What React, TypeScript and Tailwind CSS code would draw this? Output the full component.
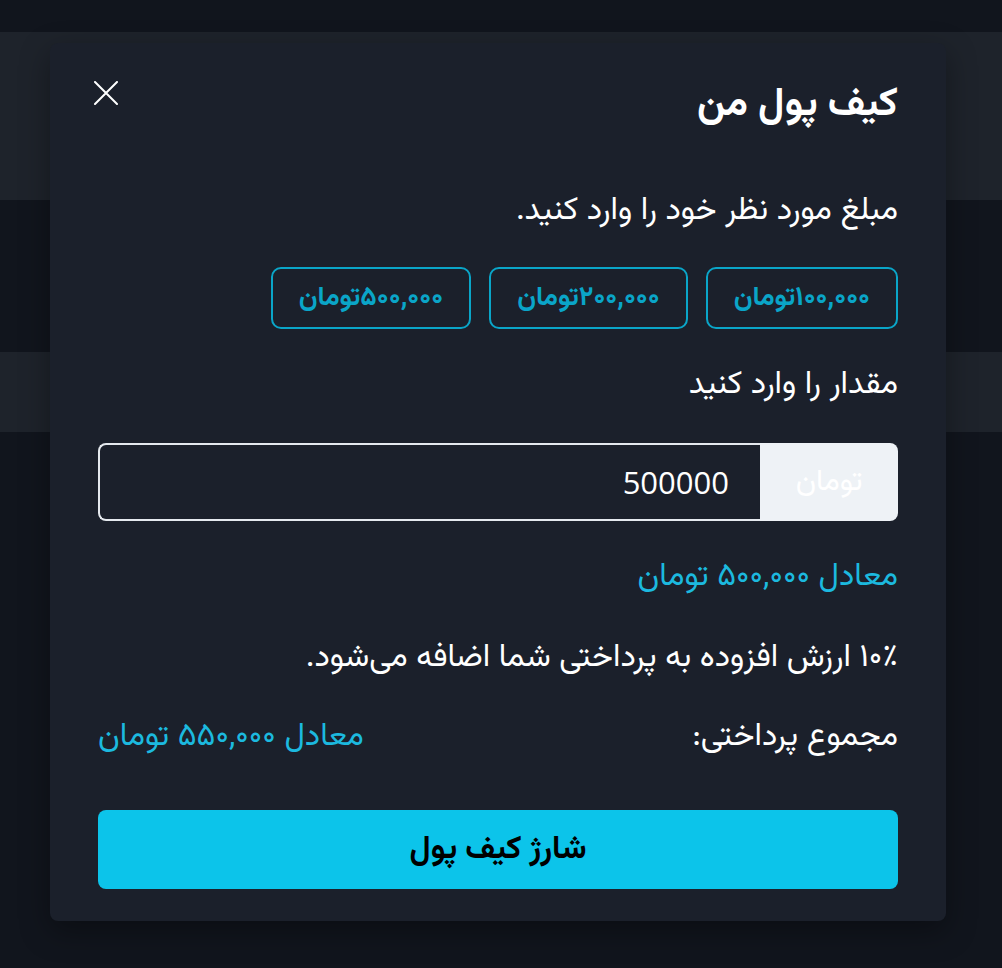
import React from "react";

const font = { fontFamily: '"Vazirmatn", "DejaVu Sans", "Noto Sans Arabic", sans-serif' };

export default function App() {
  const presets = ["۱۰۰,۰۰۰تومان", "۲۰۰,۰۰۰تومان", "۵۰۰,۰۰۰تومان"];
  return (
    <div className="relative w-[1002px] h-[968px] overflow-hidden bg-[#11151d]" style={font}>
      <div className="pt-8">
        <div className="h-[168px] bg-[#1e232b]" />
        <div className="h-[152px]" />
        <div className="h-[80px] bg-[#1e232b]" />
      </div>

      <div
        dir="rtl"
        className="absolute left-[50px] top-[43px] w-[896px] h-[878px] rounded-lg bg-[#1b202b] shadow-[0_10px_30px_rgba(0,0,0,0.35)] px-12 pt-[34px]"
      >
        <div className="flex items-start justify-between h-[56px]">
          <h2 className="text-[40px] font-bold text-white leading-[56px]">کیف پول من</h2>
          <button className="mt-[4px] w-[24px] h-[24px] flex items-center justify-center text-white -ml-[4px]">
            <svg width="24" height="24" viewBox="0 0 24 24" fill="none" stroke="currentColor" strokeWidth="2" strokeLinecap="round">
              <path d="M1 1L23 23M23 1L1 23" />
            </svg>
          </button>
        </div>

        <p className="mt-[56px] text-[32px] text-white leading-[44px]">مبلغ مورد نظر خود را وارد کنید.</p>

        <div className="mt-[34px] flex gap-[18px]">
          {presets.map((p) => (
            <button
              key={p}
              className="h-[62px] px-[26px] rounded-[10px] border-2 border-[#0aa5c8] text-[#0aa5c8] text-[27px] font-bold leading-none"
            >
              {p}
            </button>
          ))}
        </div>

        <p className="mt-[34px] text-[32px] text-white leading-[44px]">مقدار را وارد کنید</p>

        <div className="mt-[36px] flex h-[78px]">
          <div className="w-[138px] flex items-center justify-center bg-[#eef2f6] rounded-r-lg text-white text-[30px]">
            تومان
          </div>
          <div className="flex-1 flex items-center border-2 border-[#e5e9ee] border-r-0 rounded-l-lg px-[31px]" dir="ltr">
            <div className="flex-1 text-right text-white text-[31px]" style={{ fontFamily: '"Open Sans", sans-serif' }}>500000</div>
          </div>
        </div>

        <p className="mt-[34px] text-[32px] text-[#1cb9df] leading-[44px]">معادل ۵۰۰,۰۰۰ تومان</p>

        <p className="mt-[37px] text-[32px] text-white leading-[44px]">۱۰٪ ارزش افزوده به پرداختی شما اضافه می‌شود.</p>

        <div className="mt-[35px] flex items-center justify-between">
          <span className="text-[32px] text-white leading-[44px]">مجموع پرداختی:</span>
          <span className="text-[32px] text-[#1cb9df] leading-[44px]">معادل ۵۵۰,۰۰۰ تومان</span>
        </div>

        <button className="mt-[51px] w-full h-[79px] rounded-lg bg-[#0cc4ea] text-black text-[32px] font-bold">
          شارژ کیف پول
        </button>
      </div>
    </div>
  );
}
